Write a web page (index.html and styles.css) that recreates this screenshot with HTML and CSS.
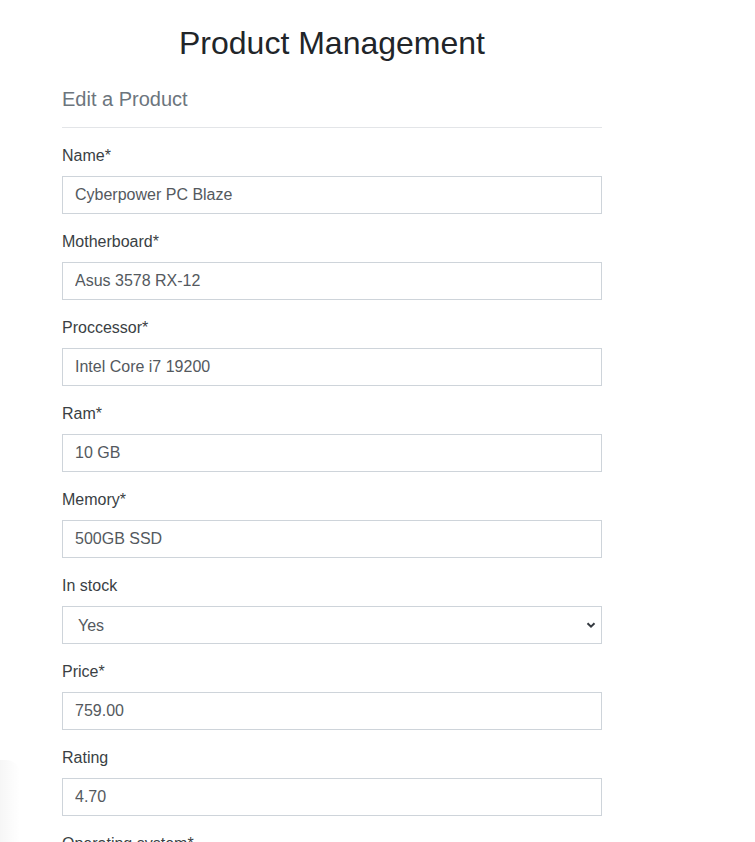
FILE: index.html
```html
<!DOCTYPE html>
<html>
<head>
<meta charset="utf-8">
<link rel="stylesheet" href="styles.css">
</head>
<body>
<div class="shade"></div>
<div class="container">
  <h1 class="title">Product Management</h1>
  <h2 class="subtitle">Edit a Product</h2>
  <hr class="divider">
  <form class="form">
    <div class="group"><label class="label">Name*</label><input class="field" type="text" value="Cyberpower PC Blaze"></div>
    <div class="group"><label class="label">Motherboard*</label><input class="field" type="text" value="Asus 3578 RX-12"></div>
    <div class="group"><label class="label">Proccessor*</label><input class="field" type="text" value="Intel Core i7 19200"></div>
    <div class="group"><label class="label">Ram*</label><input class="field" type="text" value="10 GB"></div>
    <div class="group"><label class="label">Memory*</label><input class="field" type="text" value="500GB SSD"></div>
    <div class="group"><label class="label">In stock</label>
      <div class="select-wrap">
        <select class="field select"><option>Yes</option><option>No</option></select>
        <svg class="chev" width="10" height="8" viewBox="0 0 10 8"><path d="M1.5 2.2 L5 5.7 L8.5 2.2" fill="none" stroke="#343a40" stroke-width="2"/></svg>
      </div>
    </div>
    <div class="group"><label class="label">Price*</label><input class="field" type="text" value="759.00"></div>
    <div class="group"><label class="label">Rating</label><input class="field" type="text" value="4.70"></div>
    <div class="group"><label class="label">Operating system*</label><input class="field" type="text" value="Windows 10"></div>
  </form>
</div>
</body>
</html>
```
FILE: styles.css
```css
html, body {
  margin: 0;
  padding: 0;
  background: #fff;
}
body {
  font-family: "Liberation Sans", Arial, sans-serif;
  color: #212529;
  font-size: 16px;
  line-height: 1.5;
}
.container {
  width: 540px;
  margin-left: 62px;
  padding-top: 24px;
}
.title {
  margin: 0;
  font-size: 32px;
  font-weight: 400;
  line-height: 1.2;
  text-align: center;
}
.subtitle {
  margin: 25px 0 0;
  font-size: 20px;
  font-weight: 400;
  line-height: 1.2;
  color: #6c757d;
}
.divider {
  margin: 16px 0 16px;
  border: 0;
  border-top: 1px solid #e3e5e8;
}
.form {
  display: flex;
  flex-direction: column;
  gap: 16px;
}
.group {
  display: flex;
  flex-direction: column;
  gap: 8px;
}
.label {
  display: block;
  font-size: 16px;
  line-height: 24px;
  color: #3a3f44;
}
.field {
  box-sizing: border-box;
  width: 100%;
  height: 38px;
  margin: 0;
  padding: 0 12px;
  border: 1px solid #ced4da;
  border-radius: 0;
  font-family: "Liberation Sans", Arial, sans-serif;
  font-size: 16px;
  color: #54595e;
  background: #fff;
  outline: none;
}
.select-wrap {
  position: relative;
}
.select {
  appearance: none;
  -webkit-appearance: none;
  padding-left: 15px;
}
.chev {
  position: absolute;
  right: 6px;
  top: 15px;
  pointer-events: none;
}
.shade {
  position: absolute;
  left: 0;
  top: 760px;
  width: 20px;
  height: 90px;
  background: linear-gradient(to right, rgba(0,0,0,0.035), rgba(0,0,0,0));
  border-radius: 0 14px 0 0;
}
```
